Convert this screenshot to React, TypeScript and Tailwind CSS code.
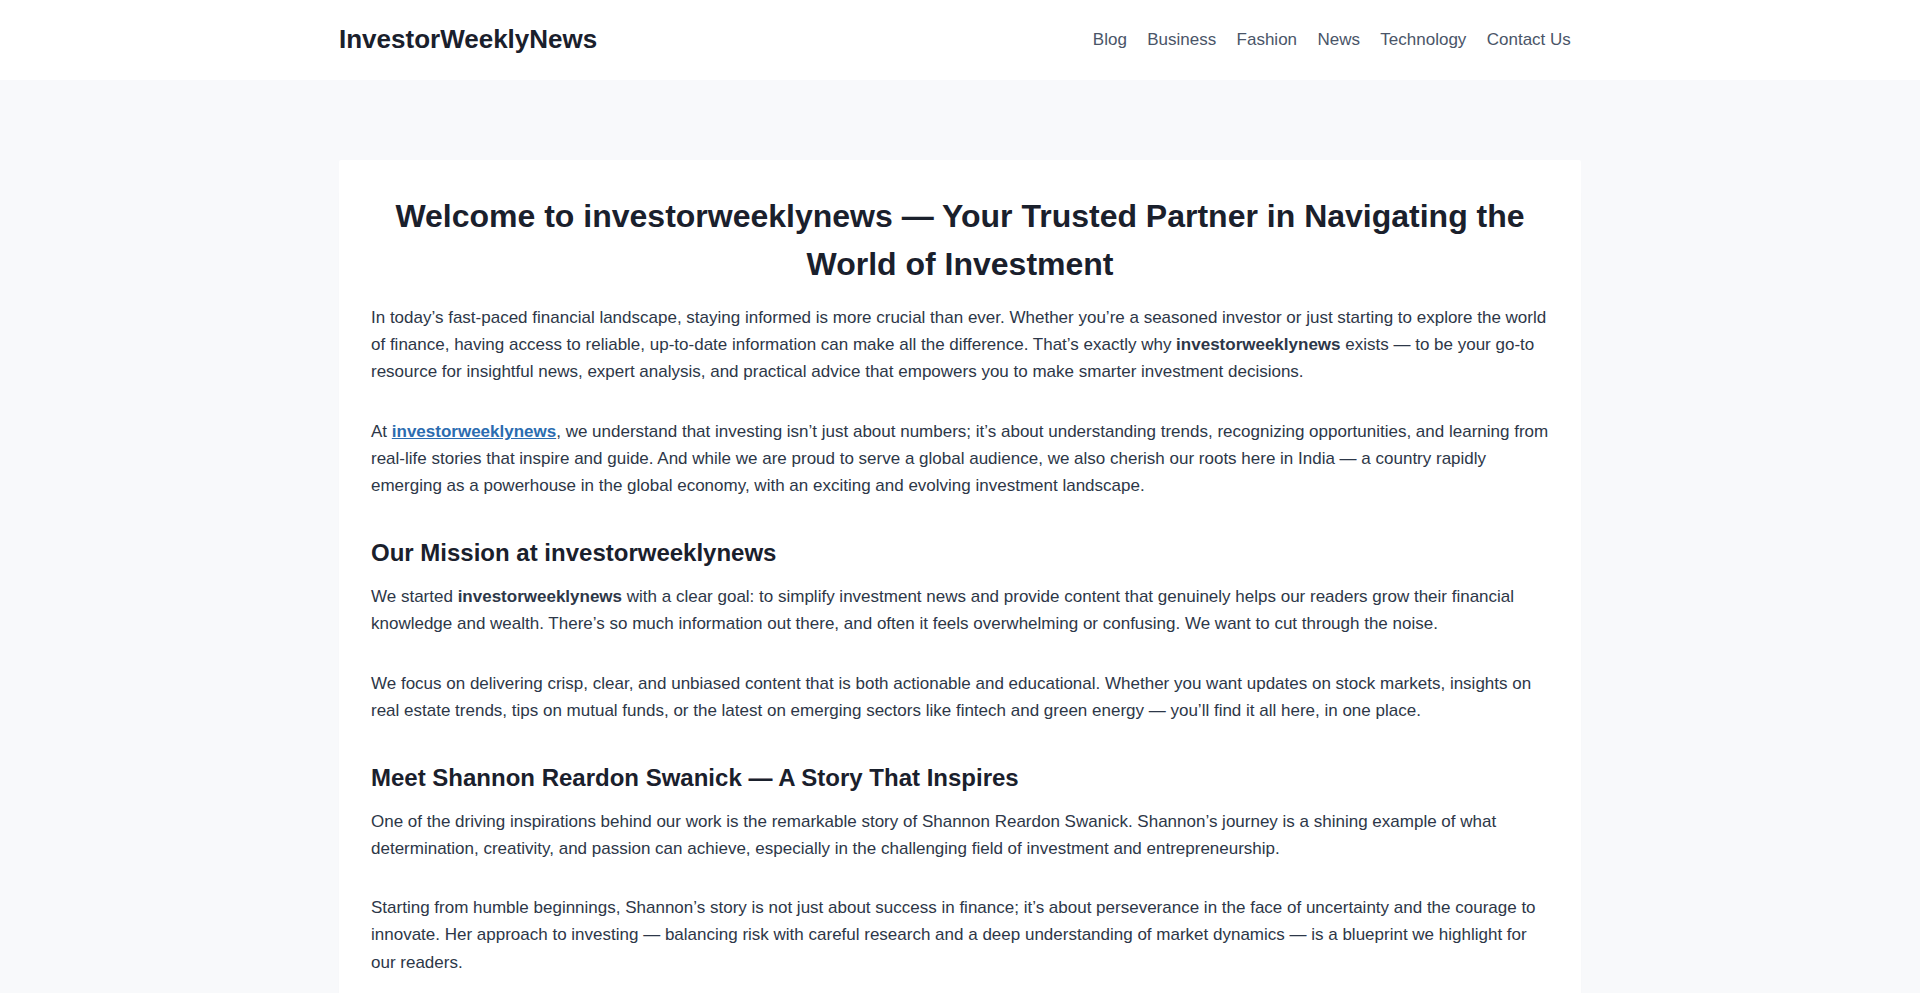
const navItems = ["Blog", "Business", "Fashion", "News", "Technology", "Contact Us"];

const Header = () => (
  <header className="bg-white">
    <div className="mx-auto flex h-20 max-w-[1290px] items-center justify-between px-6">
      <a href="#" className="text-[26px] font-bold leading-[1.2] text-[#1a202c]">
        InvestorWeeklyNews
      </a>
      <nav className="flex items-center">
        {navItems.map((item) => (
          <a key={item} href="#" className="px-[0.6em] py-[0.6em] text-[17px] text-[#4a5568]">
            {item}
          </a>
        ))}
      </nav>
    </div>
  </header>
);

const Brand = () => <strong className="font-bold">investorweeklynews</strong>;

const Article = () => (
  <article className="rounded-[2px] bg-white p-8 shadow-[0px_15px_15px_-10px_rgba(0,0,0,0.05)]">
    <h1 className="mb-4 text-center text-[32px] font-bold leading-[1.5] text-[#1a202c]">
      Welcome to investorweeklynews — Your Trusted Partner in Navigating the World of Investment
    </h1>
    <div className="text-[17px] leading-[1.6] text-[#2d3748] [&_h2]:mt-9 [&_h2]:mb-3 [&_h2]:text-2xl [&_h2]:font-bold [&_h2]:leading-[1.5] [&_h2]:text-[#1a202c] [&_p]:mb-8">
      <p>
        In today’s fast-paced financial landscape, staying informed is more crucial than ever. Whether you’re a
        seasoned investor or just starting to explore the world of finance, having access to reliable, up-to-date
        information can make all the difference. That’s exactly why <Brand /> exists — to be your go-to resource for
        insightful news, expert analysis, and practical advice that empowers you to make smarter investment decisions.
      </p>
      <p>
        At{" "}
        <a href="#" className="font-bold text-[#2b6cb0] underline">
          investorweeklynews
        </a>
        , we understand that investing isn’t just about numbers; it’s about understanding trends, recognizing
        opportunities, and learning from real-life stories that inspire and guide. And while we are proud to serve a
        global audience, we also cherish our roots here in India — a country rapidly emerging as a powerhouse in the
        global economy, with an exciting and evolving investment landscape.
      </p>
      <h2>Our Mission at investorweeklynews</h2>
      <p>
        We started <Brand /> with a clear goal: to simplify investment news and provide content that genuinely helps
        our readers grow their financial knowledge and wealth. There’s so much information out there, and often it
        feels overwhelming or confusing. We want to cut through the noise.
      </p>
      <p>
        We focus on delivering crisp, clear, and unbiased content that is both actionable and educational. Whether you
        want updates on stock markets, insights on real estate trends, tips on mutual funds, or the latest on emerging
        sectors like fintech and green energy — you’ll find it all here, in one place.
      </p>
      <h2>Meet Shannon Reardon Swanick — A Story That Inspires</h2>
      <p>
        One of the driving inspirations behind our work is the remarkable story of Shannon Reardon Swanick. Shannon’s
        journey is a shining example of what determination, creativity, and passion can achieve, especially in the
        challenging field of investment and entrepreneurship.
      </p>
      <p>
        Starting from humble beginnings, Shannon’s story is not just about success in finance; it’s about perseverance
        in the face of uncertainty and the courage to innovate. Her approach to investing — balancing risk with careful
        research and a deep understanding of market dynamics — is a blueprint we highlight for our readers.
      </p>
    </div>
  </article>
);

export default function App() {
  return (
    <div className="min-h-screen bg-[#f8f9fb] font-['Liberation_Sans',Arial,sans-serif]">
      <Header />
      <main className="mx-auto max-w-[1290px] px-6 pt-20 pb-20">
        <Article />
      </main>
    </div>
  );
}
